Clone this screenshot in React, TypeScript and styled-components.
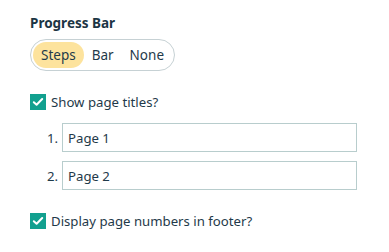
import React from 'react';
import styled, { createGlobalStyle } from 'styled-components';

const GlobalStyle = createGlobalStyle`
  body {
    margin: 0;
    background: #ffffff;
    font-family: "Noto Sans", "Open Sans", sans-serif;
    color: #1f3a4a;
  }
`;

const Panel = styled.div`
  width: 389px;
  height: 252px;
  box-sizing: border-box;
  padding: 14px 32px 0 30px;
  display: flex;
  flex-direction: column;
`;

const Title = styled.div`
  font-size: 13.5px;
  font-weight: 700;
  line-height: 18px;
  color: #1c3544;
`;

const Segmented = styled.div`
  margin-top: 7px;
  align-self: flex-start;
  display: flex;
  align-items: center;
  height: 32px;
  box-sizing: border-box;
  padding: 2px;
  border: 1px solid #c6d1d4;
  border-radius: 16px;
`;

const Segment = styled.div<{ $active?: boolean }>`
  height: 26px;
  display: flex;
  align-items: center;
  padding: 0 8px;
  border-radius: 13px;
  font-size: 13.5px;
  background: ${(p) => (p.$active ? '#fde39d' : 'transparent')};
  color: #1f3a4a;
`;

const CheckRow = styled.label<{ $top: number }>`
  margin-top: ${(p) => p.$top}px;
  display: flex;
  align-items: center;
  gap: 5px;
  font-size: 13.2px;
  line-height: 16px;
`;

const Box = styled.span`
  width: 16px;
  height: 16px;
  background: #12a08f;
  display: flex;
  align-items: center;
  justify-content: center;
  flex-shrink: 0;
`;

const Pages = styled.div`
  margin-top: 13px;
  display: flex;
  flex-direction: column;
  gap: 9px;
`;

const PageRow = styled.div`
  display: grid;
  grid-template-columns: 28px 1fr;
  column-gap: 4px;
  align-items: center;
`;

const Num = styled.span`
  text-align: right;
  font-size: 13.2px;
`;

const TitleInput = styled.div`
  height: 29px;
  box-sizing: border-box;
  border: 1px solid #b8cdcd;
  display: flex;
  align-items: center;
  padding-left: 5px;
  font-size: 13.2px;
`;

const Check = () => (
  <Box>
    <svg width="12" height="12" viewBox="0 0 12 12">
      <path d="M1.8 6.2 L4.6 8.8 L10.2 3" fill="none" stroke="#fff" strokeWidth="2" strokeLinecap="round" strokeLinejoin="round" />
    </svg>
  </Box>
);

export default function App() {
  return (
    <>
      <GlobalStyle />
      <Panel>
        <Title>Progress Bar</Title>
        <Segmented>
          <Segment $active>Steps</Segment>
          <Segment>Bar</Segment>
          <Segment>None</Segment>
        </Segmented>
        <CheckRow $top={23}>
          <Check />
          Show page titles?
        </CheckRow>
        <Pages>
          {['Page 1', 'Page 2'].map((p, i) => (
            <PageRow key={p}>
              <Num>{i + 1}.</Num>
              <TitleInput>{p}</TitleInput>
            </PageRow>
          ))}
        </Pages>
        <CheckRow $top={23}>
          <Check />
          Display page numbers in footer?
        </CheckRow>
      </Panel>
    </>
  );
}
